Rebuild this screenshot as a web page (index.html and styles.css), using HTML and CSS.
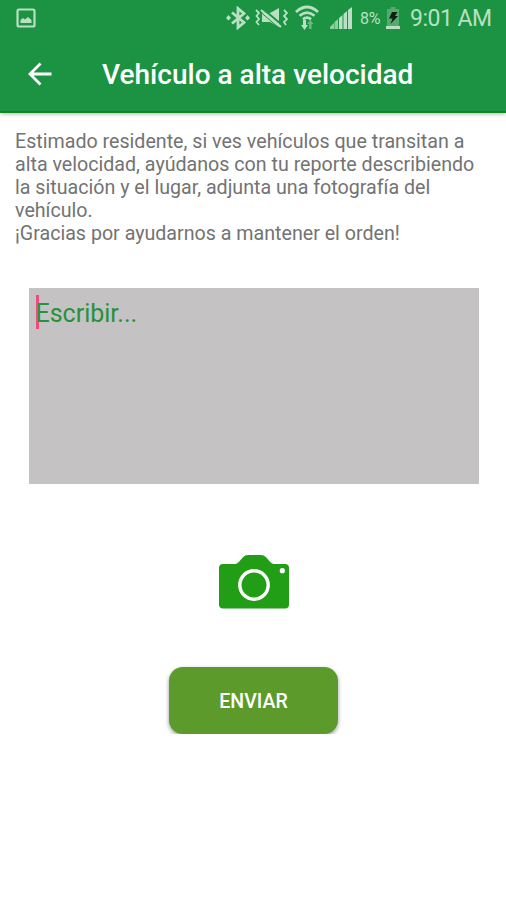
FILE: index.html
```html
<!DOCTYPE html>
<html lang="es">
<head>
<meta charset="utf-8">
<title>Vehículo a alta velocidad</title>
<link rel="stylesheet" href="styles.css">
</head>
<body>
<header class="header">
  <div class="status">
    <svg class="picture" width="20" height="20" viewBox="0 0 20 20"><rect x="1.500" y="1.500" width="17" height="17" rx="1.500" fill="none" stroke="currentColor" stroke-width="2.200"/><path fill="currentColor" d="M4.500 15v-3l2.500-2 2 1.500L12 9l3.500 3v3z"/></svg>
    <svg class="bluetooth" width="24" height="24" viewBox="0 0 24 24"><path fill="none" stroke="currentColor" stroke-width="2.800" d="M6 6.500l12 10-6 5v-19l6 5-12 10"/><path fill="currentColor" d="M2.500 9L5 12l-2.500 2.500L0 12zM21.500 9L24 12l-2.500 2.500L19 12z"/></svg>
    <svg class="mute" width="33" height="22" viewBox="0 0 33 22"><path fill="currentColor" d="M7 6h8l9-5v19l-9-5H7z"/><path d="M7 1l20 17" stroke="#1b9343" stroke-width="2"/><path d="M6 3l20 17" stroke="currentColor" stroke-width="2.200"/><path d="M6 5.500l18 15.500" stroke="#1b9343" stroke-width="1"/><path fill="none" stroke="currentColor" stroke-width="1.800" d="M1 3l3 3-2.500 3L4 12l-2.500 3L4 18M29 3l3 3-3 3 3 3-3 3 2 3"/></svg>
    <svg class="wifi" width="24" height="26" viewBox="0 0 24 26"><g fill="none" stroke="currentColor" stroke-width="2.800"><path d="M1 7Q12-3 23 7M4.500 10.800Q12 4.500 19.500 10.800M8 14.300Q12 11 16 14.300"/></g><path fill="currentColor" d="M8 15h3v5h2l-3.500 5L6 20h2z"/><path fill="currentColor" opacity=".5" d="M14 24v-5h-2l3.300-4 3.300 4h-2v5z"/></svg>
    <svg class="signal" width="22" height="22" viewBox="0 0 22 22"><path fill="currentColor" opacity=".75" d="M0 22v-2l4-4v6zM4.500 22v-7l3.500-3v10z"/><path fill="currentColor" d="M9 22V11l3.500-3v14zM13.500 22V7L17 4v18zM18 22V3l4-3v22z"/></svg>
    <span class="percent">8%</span>
    <svg class="battery" width="14" height="22" viewBox="0 0 14 22"><path fill="#55aa6c" d="M4.500 0h5v2H13v18H1V2h3.500z"/><path fill="currentColor" d="M0 19h14v3H0z"/><path fill="#102018" d="M6 5h5.500L9 9h3l-7.500 8 2-5.500H3z"/></svg>
    <span class="time">9:01 AM</span>
  </div>
  <div class="toolbar">
    <svg class="back" width="24" height="24" viewBox="0 0 24 24"><path fill="none" stroke="currentColor" stroke-width="2.800" d="M23.500 12H2.500M12.500 1.500L2 12l10.500 10.500"/></svg>
    <h1 class="title">Vehículo a alta velocidad</h1>
  </div>
</header>
<main class="content">
  <p class="intro">Estimado residente, si ves vehículos que transitan a<br>alta velocidad, ayúdanos con tu reporte describiendo<br>la situación y el lugar, adjunta una fotografía del<br>vehículo.<br>¡Gracias por ayudarnos a mantener el orden!</p>
  <div class="field"><span class="caret"></span><span class="hint">Escribir...</span></div>
  <svg class="camera" width="70" height="54" viewBox="0 0 70 54"><path fill="#219d16" d="M4 9h12q2 0 3.500-1.700l4.500-5Q26 0 29 0h13q3 0 5 2.300l4.500 5Q53 9 55 9h11q4 0 4 4v36.500q0 4-4 4H4q-4 0-4-4V13q0-4 4-4z"/><circle cx="35" cy="30" r="14.200" fill="none" stroke="#fff" stroke-width="3.400"/><circle cx="63.300" cy="15.700" r="2.600" fill="#fff"/></svg>
  <button class="send">ENVIAR</button>
</main>
</body>
</html>
```
FILE: styles.css
```css
body {
  margin: 0;
  background: #fff;
  font-family: Roboto, "Liberation Sans", sans-serif;
}

.header {
  height: 113px;
  box-sizing: border-box;
  background: #1b9343;
  border-bottom: 2px solid #12891f;
  box-shadow: 0 1px 4px rgba(0, 0, 0, 0.3);
}

.status {
  display: flex;
  align-items: center;
  height: 35px;
  padding: 0 15px 0 16px;
  color: #b9e0c2;
  white-space: nowrap;
}

.status svg {
  flex: none;
}

.bluetooth {
  margin-left: auto;
}

.mute {
  margin-left: 5px;
}

.wifi {
  margin-left: 7px;
}

.signal {
  margin-left: 11px;
}

.percent {
  width: 22px;
  margin-left: 8px;
  padding-top: 1px;
  font-size: 16px;
  letter-spacing: -0.2px;
}

.battery {
  margin-left: 4px;
}

.time {
  width: 81px;
  margin-left: 10px;
  padding-top: 1px;
  font-size: 23px;
  letter-spacing: -0.5px;
}

.toolbar {
  display: flex;
  align-items: center;
  height: 78px;
  padding-left: 28px;
  color: #fff;
}

.title {
  margin: 0 0 0 50px;
  padding-top: 2px;
  font-size: 28px;
  font-weight: 500;
  line-height: 32px;
  white-space: nowrap;
}

.content {
  display: flex;
  flex-direction: column;
  align-items: center;
  padding: 17px 0 0;
}

.intro {
  align-self: stretch;
  margin: 0 0 0 15px;
  color: #737373;
  font-size: 19.65px;
  line-height: 23px;
  white-space: nowrap;
}

.field {
  display: flex;
  width: 450px;
  height: 196px;
  margin: 43px 0 0 1px;
  padding: 7px 7px 0;
  box-sizing: border-box;
  background: #c5c2c3;
}

.caret {
  width: 3px;
  height: 34px;
  margin-right: -3px;
  background: #f14b7d;
}

.hint {
  color: #27913b;
  font-size: 25px;
  line-height: 37px;
}

.camera {
  margin: 71px 0 0 1px;
}

.send {
  width: 169px;
  height: 67px;
  margin: 58px 0 0 1px;
  padding: 2px 0 0;
  border: 0;
  border-radius: 14px;
  background: #5c9b2b;
  box-shadow: 0 2px 4px rgba(0, 0, 0, 0.4);
  color: #fff;
  font: 500 19.5px Roboto, "Liberation Sans", sans-serif;
}
```
